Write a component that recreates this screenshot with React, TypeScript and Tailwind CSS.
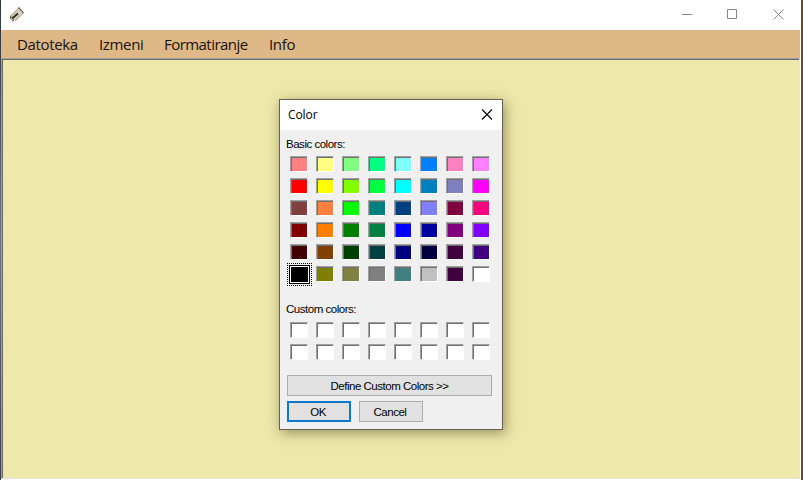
const basicColors = [
  ['#ff8080', '#ffff80', '#80ff80', '#00ff80', '#80ffff', '#0080ff', '#ff80c0', '#ff80ff'],
  ['#ff0000', '#ffff00', '#80ff00', '#00ff40', '#00ffff', '#0080c0', '#8080c0', '#ff00ff'],
  ['#804040', '#ff8040', '#00ff00', '#008080', '#004080', '#8080ff', '#800040', '#ff0080'],
  ['#800000', '#ff8000', '#008000', '#008040', '#0000ff', '#0000a0', '#800080', '#8000ff'],
  ['#400000', '#804000', '#004000', '#004040', '#000080', '#000040', '#400040', '#400080'],
  ['#000000', '#808000', '#808040', '#808080', '#408080', '#c0c0c0', '#400040', '#ffffff'],
];
const customColors = [Array(8).fill('#ffffff'), Array(8).fill('#ffffff')] as string[][];

function Swatch({ color, selected = false }: { color: string; selected?: boolean }) {
  return (
    <button
      aria-label={color}
      className="relative block h-4 w-[18px] border border-t-[#a0a0a0] border-r-white border-b-white border-l-[#a0a0a0] shadow-[inset_1px_1px_0_#707070]"
      style={{ backgroundColor: color }}
    >
      {selected && (
        <>
          <span className="absolute -top-[4px] -left-[4px] h-[23px] w-[25px] border border-dotted border-black" />
          <span className="absolute -top-[2px] -left-[2px] h-[19px] w-[21px] border border-black bg-black shadow-[inset_0_0_0_1px_white]" />
        </>
      )}
    </button>
  );
}

function SwatchGrid({ rows, selectable = false }: { rows: string[][]; selectable?: boolean }) {
  return (
    <div className="grid w-fit grid-cols-8 gap-x-2 gap-y-1.5">
      {rows.map((row, r) =>
        row.map((color, c) => (
          <Swatch key={`${r}-${c}`} color={color} selected={selectable && r === 5 && c === 0} />
        )),
      )}
    </div>
  );
}

function ColorDialog() {
  return (
    <section className="absolute top-[99px] left-[279px] flex h-[331px] w-[224px] flex-col border border-[#65634f] bg-[#f0f0f0] font-['Liberation_Sans',sans-serif] text-[11.5px] leading-[14px] tracking-[-0.48px] text-black shadow-[2px_3px_12px_rgba(60,55,20,0.5)]">
      <header className="flex h-[30px] shrink-0 items-center justify-between bg-white pr-[9px] pl-[8px]">
        <h1 className="font-['Open_Sans','Noto_Sans',sans-serif] text-[12px] tracking-[-0.1px]">Color</h1>
        <svg width="12" height="12" viewBox="0 0 12 12" stroke="#000" strokeWidth="1.1">
          <path d="M1 .5l10 10M11 .5L1 10.500" />
        </svg>
      </header>
      <div className="pl-1.5">
        <p className="mt-[7px] mb-[5px]">Basic colors:</p>
        <div className="pl-1">
          <SwatchGrid rows={basicColors} selectable />
        </div>
        <p className="mt-[20px] mb-[6px]">Custom colors:</p>
        <div className="pl-1">
          <SwatchGrid rows={customColors} />
        </div>
        <div className="mt-[15px] ml-px">
          <button className="block h-[21px] w-[205px] border border-[#adadad] bg-[#e1e1e1]">Define Custom Colors &gt;&gt;</button>
          <div className="mt-[5px] flex gap-2">
            <button className="h-[21px] w-16 border-2 border-[#0b78cc] bg-[#e1e1e1] pr-0.5">OK</button>
            <button className="h-[21px] w-16 border border-[#adadad] bg-[#e1e1e1] pr-0.5">Cancel</button>
          </div>
        </div>
      </div>
    </section>
  );
}

function AppIcon() {
  return (
    <svg width="18" height="18" viewBox="0 0 18 18">
      <path d="M2 11.500L11 3.500l4.500 4.500-8.500 7.500-2-1-2 .5z" fill="#d8cfba" />
      <path d="M2 11.500L10.500 3.500" fill="none" stroke="#9c917b" strokeWidth="1" />
      <path d="M4 13.500L10 8.500" stroke="#342d22" strokeWidth="2" />
      <path d="M10.500 2.500l5.500 6M2.500 11.500l.5 3M4.500 16l1.500-1.500" fill="none" stroke="#41382c" strokeWidth="1.200" strokeDasharray="2 .7" />
      <path d="M15 8.500L7 16" stroke="#a4967c" strokeWidth="1" />
    </svg>
  );
}

export default function App() {
  return (
    <main className="relative flex h-[480px] w-[803px] overflow-hidden bg-white font-['Open_Sans','Noto_Sans',sans-serif]">
      <div className="w-px shrink-0 bg-linear-to-b from-[#29383c] via-[#66777b] to-[#354047]" />
      <div className="flex w-[799px] shrink-0 flex-col pb-px">
        <header className="flex h-[30px] shrink-0 items-center justify-between bg-white pr-4 pl-[7px]">
          <div className="-mt-0.5"><AppIcon /></div>
          <div className="-mt-px flex gap-[35px]">
            <svg width="11" height="11" viewBox="0 0 11 11" stroke="#858585"><path d="M1 5.500h10" /></svg>
            <svg width="11" height="11" viewBox="0 0 11 11" fill="none" stroke="#858585"><path d="M.5 .5h9v9H.5z" /></svg>
            <svg width="11" height="11" viewBox="0 0 11 11" stroke="#858585"><path d="M.5 .5l10 10M10.500 .5l-10 10" /></svg>
          </div>
        </header>
        <nav className="flex h-7 shrink-0 items-center gap-[21px] bg-[#deb887] pl-4 text-[15px] tracking-[-0.35px] text-[#19130c]">
          <span className="w-[61px] whitespace-nowrap">Datoteka</span>
          <span className="w-[44px] whitespace-nowrap">Izmeni</span>
          <span className="w-[84px] whitespace-nowrap tracking-[-0.55px]">Formatiranje</span>
          <span>Info</span>
        </nav>
        <div className="flex-1 border border-t-[#a0a0a0] border-r-[#e3e3e3] border-b-[#e3e3e3] border-l-[#a0a0a0] bg-[#eee8aa] shadow-[inset_1px_1px_0_#696969]" />
      </div>
      <div className="ml-px w-0.5 shrink-0 bg-[#74472a]" />
      <ColorDialog />
    </main>
  );
}
